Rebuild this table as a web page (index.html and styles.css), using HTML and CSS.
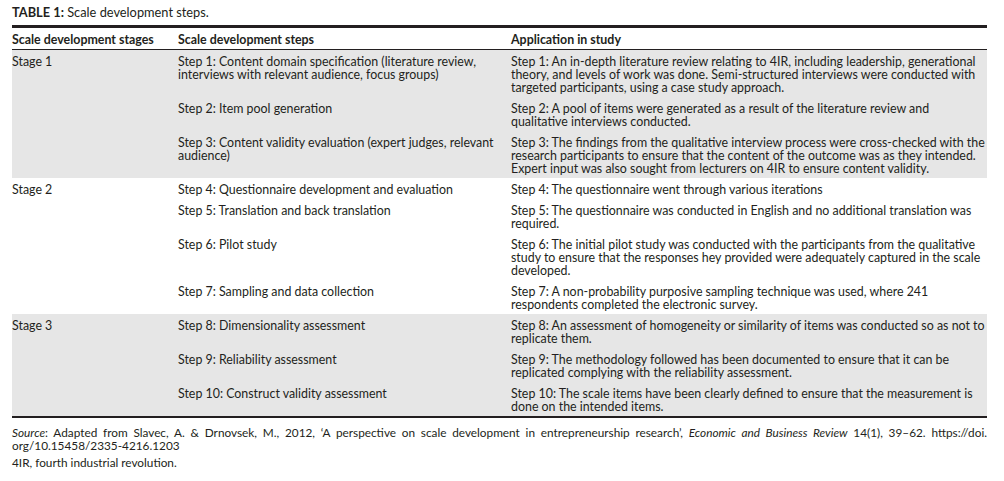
FILE: index.html
```html
<!DOCTYPE html>
<html lang="en">
<head>
<meta charset="utf-8">
<title>Table 1: Scale development steps</title>
<link rel="stylesheet" href="styles.css">
</head>
<body>
<div class="page">
  <p class="caption"><b>TABLE 1:</b> Scale development steps.</p>
  <table class="data">
    <colgroup>
      <col class="c1"><col class="c2"><col class="c3">
    </colgroup>
    <thead>
      <tr>
        <th>Scale development stages</th>
        <th>Scale development steps</th>
        <th>Application in study</th>
      </tr>
    </thead>
    <tbody class="shade">
      <tr>
        <td rowspan="3">Stage 1</td>
        <td>Step 1: Content domain specification (literature review, interviews with relevant audience, focus groups)</td>
        <td>Step 1: An in-depth literature review relating to 4IR, including leadership, generational theory, and levels of work was done. Semi-structured interviews were conducted with targeted participants, using a case study approach.</td>
      </tr>
      <tr>
        <td>Step 2: Item pool generation</td>
        <td>Step 2: A pool of items were generated as a result of the literature review and qualitative interviews conducted.</td>
      </tr>
      <tr>
        <td>Step 3: Content validity evaluation (expert judges, relevant audience)</td>
        <td>Step 3: The findings from the qualitative interview process were cross-checked with the research participants to ensure that the content of the outcome was as they intended. Expert input was also sought from lecturers on 4IR to ensure content validity.</td>
      </tr>
    </tbody>
    <tbody>
      <tr>
        <td rowspan="4">Stage 2</td>
        <td>Step 4: Questionnaire development and evaluation</td>
        <td>Step 4: The questionnaire went through various iterations</td>
      </tr>
      <tr>
        <td>Step 5: Translation and back translation</td>
        <td>Step 5: The questionnaire was conducted in English and no additional translation was required.</td>
      </tr>
      <tr>
        <td>Step 6: Pilot study</td>
        <td>Step 6: The initial pilot study was conducted with the participants from the qualitative study to ensure that the responses hey provided were adequately captured in the scale developed.</td>
      </tr>
      <tr>
        <td>Step 7: Sampling and data collection</td>
        <td>Step 7: A non-probability purposive sampling technique was used, where 241 respondents completed the electronic survey.</td>
      </tr>
    </tbody>
    <tbody class="shade last">
      <tr>
        <td rowspan="3">Stage 3</td>
        <td>Step 8: Dimensionality assessment</td>
        <td>Step 8: An assessment of homogeneity or similarity of items was conducted so as not to replicate them.</td>
      </tr>
      <tr>
        <td>Step 9: Reliability assessment</td>
        <td>Step 9: The methodology followed has been documented to ensure that it can be replicated complying with the reliability assessment.</td>
      </tr>
      <tr>
        <td>Step 10: Construct validity assessment</td>
        <td>Step 10: The scale items have been clearly defined to ensure that the measurement is done on the intended items.</td>
      </tr>
    </tbody>
  </table>
  <p class="source"><i>Source</i>: Adapted from Slavec, A. &amp; Drnovsek, M., 2012, ‘A perspective on scale development in entrepreneurship research’, <i>Economic and Business Review</i> 14(1), 39–62. https://doi.<wbr>org/10.15458/2335-4216.1203</p>
  <p class="note">4IR, fourth industrial revolution.</p>
</div>
</body>
</html>
```

FILE: styles.css
```css
html, body {
  margin: 0;
  padding: 0;
  background: #ffffff;
}

body {
  font-family: Lato, "Open Sans", sans-serif;
  font-size: 12.4px;
  line-height: 13px;
  color: #231f20;
}

.page {
  width: 975px;
  padding: 6px 0 0 12px;
}

.caption {
  margin: 0 0 6px 0;
  font-size: 12.8px;
}

.caption b {
  font-weight: 700;
}

.data {
  width: 100%;
  border-collapse: collapse;
  border-top: 3px solid #231f20;
  border-bottom: 2px solid #231f20;
  table-layout: fixed;
}

.c1 { width: 166px; }
.c2 { width: 333px; }
.c3 { width: auto; }

.data th {
  text-align: left;
  font-weight: 700;
  padding: 5px 0 3px 0;
  border-bottom: 1px solid #231f20;
  vertical-align: top;
}

.data td {
  padding: 5px 0 3px 0;
  vertical-align: top;
}

.shade td {
  background: #e6e6e6;
}

.source {
  margin: 8px 0 0 0;
  font-size: 11.8px;
  text-align: justify;
}

.note {
  margin: 4px 0 0 0;
  font-size: 11.8px;
}
```
